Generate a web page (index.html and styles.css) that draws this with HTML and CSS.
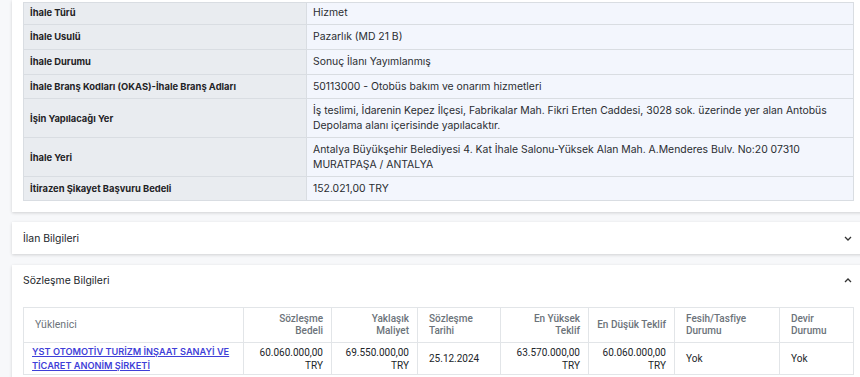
FILE: index.html
```html
<!DOCTYPE html>
<html lang="tr">
<head>
<meta charset="utf-8">
<title>İhale Detay</title>
<link rel="stylesheet" href="styles.css">
</head>
<body>
<div class="page">
  <section class="card card-detail">
    <table class="info">
      <colgroup><col class="c-label"><col></colgroup>
      <tbody>
        <tr class="first-row"><th>İhale Türü</th><td>Hizmet</td></tr>
        <tr class="tall-row"><th>İhale Usulü</th><td>Pazarlık (MD 21 B)</td></tr>
        <tr class="tall-row"><th>İhale Durumu</th><td>Sonuç İlanı Yayımlanmış</td></tr>
        <tr><th>İhale Branş Kodları (OKAS)-İhale Branş Adları</th><td>50113000 - Otobüs bakım ve onarım hizmetleri</td></tr>
        <tr><th>İşin Yapılacağı Yer</th><td>İş teslimi, İdarenin Kepez İlçesi, Fabrikalar Mah. Fikri Erten Caddesi, 3028 sok. üzerinde yer alan Antobüs Depolama alanı içerisinde yapılacaktır.</td></tr>
        <tr><th>İhale Yeri</th><td>Antalya Büyükşehir Belediyesi 4. Kat İhale Salonu-Yüksek Alan Mah. A.Menderes Bulv. No:20 07310 MURATPAŞA / ANTALYA</td></tr>
        <tr><th>İtirazen Şikayet Başvuru Bedeli</th><td>152.021,00 TRY</td></tr>
      </tbody>
    </table>
  </section>

  <section class="card card-collapsed">
    <div class="card-head">
      <span class="card-title">İlan Bilgileri</span>
      <svg class="chev" width="8" height="5" viewBox="0 0 8 5"><path d="M1 1l3 3 3-3" fill="none" stroke="#333" stroke-width="1.3"/></svg>
    </div>
  </section>

  <section class="card card-open">
    <div class="card-head">
      <span class="card-title">Sözleşme Bilgileri</span>
      <svg class="chev" width="8" height="5" viewBox="0 0 8 5"><path d="M1 4l3-3 3 3" fill="none" stroke="#333" stroke-width="1.3"/></svg>
    </div>
    <table class="contracts">
      <colgroup>
        <col class="w-firm"><col class="w-88"><col class="w-86"><col class="w-83"><col class="w-88"><col class="w-86"><col class="w-105"><col>
      </colgroup>
      <thead>
        <tr>
          <th class="l first">Yüklenici</th>
          <th class="r">Sözleşme<br>Bedeli</th>
          <th class="r">Yaklaşık<br>Maliyet</th>
          <th class="l">Sözleşme<br>Tarihi</th>
          <th class="r">En Yüksek<br>Teklif</th>
          <th class="r nw">En Düşük Teklif</th>
          <th class="l">Fesih/Tasfiye<br>Durumu</th>
          <th class="l">Devir<br>Durumu</th>
        </tr>
      </thead>
      <tbody>
        <tr>
          <td class="l firm"><a href="#">YST OTOMOTİV TURİZM İNŞAAT SANAYİ VE TİCARET ANONİM ŞİRKETİ</a></td>
          <td class="r">60.060.000,00<br>TRY</td>
          <td class="r">69.550.000,00<br>TRY</td>
          <td class="l">25.12.2024</td>
          <td class="r">63.570.000,00<br>TRY</td>
          <td class="r">60.060.000,00<br>TRY</td>
          <td class="l">Yok</td>
          <td class="l">Yok</td>
        </tr>
      </tbody>
    </table>
  </section>
</div>
</body>
</html>
```

FILE: styles.css
```css
html, body {
  margin: 0;
  padding: 0;
}
body {
  background: #f7f8fa;
  overflow: hidden;
  font-family: "Inter", "Roboto", "Liberation Sans", sans-serif;
  color: #212529;
  font-size: 11px;
}
.page {
  width: 853px;
  padding-left: 12px;
}
.card {
  background: #fff;
  box-shadow: 0 1px 3px rgba(0, 0, 0, 0.16);
}
.card-detail {
  padding: 2px 11px 11px 11px;
}
.card-collapsed {
  margin-top: 10px;
}
.card-open {
  margin-top: 11px;
  padding-bottom: 8px;
}
.card-head {
  height: 32px;
  padding: 0 11px;
  display: flex;
  align-items: center;
  justify-content: space-between;
  font-family: "Inter", "Liberation Sans", sans-serif;
  font-size: 10.4px;
  color: #212529;
}
.card-open .card-head {
  height: 30px;
}
.chev {
  display: block;
  margin-right: 2px;
}

/* detail table */
.info {
  width: 831px;
  border-collapse: collapse;
  table-layout: fixed;
}
.c-label {
  width: 283px;
}
.info th,
.info td {
  border: 1px solid #d9dde2;
  padding: 4px 6px;
  line-height: 15px;
  text-align: left;
  vertical-align: middle;
}
.info .first-row th,
.info .first-row td {
  padding-top: 2px;
}
.info .tall-row th,
.info .tall-row td {
  padding-bottom: 5px;
}
.info th {
  background: #e9ecf0;
  font-weight: 700;
  font-size: 9.4px;
  color: #1f2326;
}
.info td {
  background: #f3f6fd;
  color: #2a2d31;
  font-size: 10.4px;
}

/* contracts table */
.contracts {
  margin: 12px 0 0 11px;
  width: 831px;
  border-collapse: collapse;
  table-layout: fixed;
  font-family: "Roboto", "Liberation Sans", sans-serif;
}
.w-firm { width: 220px; }
.w-88 { width: 88px; }
.w-86 { width: 86px; }
.w-83 { width: 83px; }
.w-105 { width: 105px; }
.contracts th,
.contracts td {
  border: 1px solid #e2e5e8;
  padding: 0 8px 0 11px;
  vertical-align: middle;
}
.contracts th {
  height: 34px;
  font-weight: 500;
  font-size: 10px;
  color: #6c737a;
  line-height: 12px;
}
.contracts th.nw {
  white-space: nowrap;
  padding-left: 4px;
}
.contracts th.first {
  font-weight: 400;
  font-size: 10.5px;
}
.contracts td {
  height: 31px;
  line-height: 13px;
  font-size: 10px;
  color: #212529;
}
.contracts .r {
  text-align: right;
}
.contracts .l {
  text-align: left;
}
.contracts td.firm {
  padding-left: 8px;
}
.firm a {
  font-family: "Inter", "Liberation Sans", sans-serif;
  font-weight: 600;
  font-size: 9.2px;
  line-height: 14px;
  color: #3f3fd8;
  text-decoration: underline;
}
```
